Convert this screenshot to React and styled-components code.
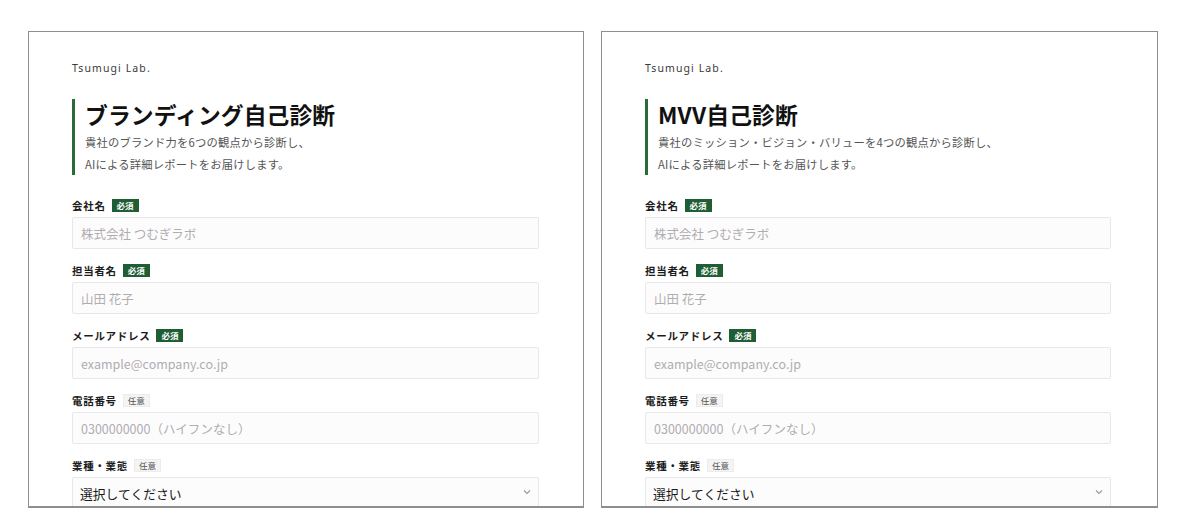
import React from "react";
import styled, { createGlobalStyle } from "styled-components";

const Global = createGlobalStyle`
  html, body { margin: 0; padding: 0; background: #ffffff; }
  body { font-family: "Noto Sans CJK JP", "Noto Sans", sans-serif; color: #1a1a1a; }
  * { box-sizing: border-box; }
`;

const Stage = styled.div`
  display: flex;
  gap: 17px;
  padding: 31px 0 0 28px;
  height: 530px;
`;

const Panel = styled.section`
  width: ${(p) => p.$w}px;
  height: 477px;
  border: 1px solid #8e8e8e;
  border-bottom-width: 2px;
  background: #fff;
  overflow: hidden;
  padding: 27px 44px 0 43px;
  display: flex;
  flex-direction: column;
`;

const Brand = styled.div`
  font-family: "Noto Sans", sans-serif;
  font-size: 10.5px;
  letter-spacing: 1.1px;
  color: #3a3a3a;
  line-height: 18px;
  margin-bottom: 22px;
`;

const Hero = styled.header`
  border-left: 3px solid #2c6a3c;
  padding-left: 10px;
  margin-bottom: 22px;
`;

const Title = styled.h1`
  margin: 0;
  font-size: 22.8px;
  font-weight: 700;
  line-height: 32px;
  color: #111;
  letter-spacing: 0.1px;
`;

const Lead = styled.p`
  margin: 0;
  font-size: 11.3px;
  line-height: 22px;
  color: #555;
  letter-spacing: 0.2px;
`;

const Field = styled.div`
  display: flex;
  flex-direction: column;
  gap: 4px;
  margin-bottom: 13px;
`;

const LabelRow = styled.label`
  display: flex;
  align-items: center;
  gap: 6px;
  height: 16px;
  font-size: 10.5px;
  font-weight: 700;
  letter-spacing: 0.7px;
  color: #1c1c1c;
`;

const Badge = styled.span`
  display: inline-flex;
  align-items: center;
  height: 13px;
  padding: 0 4px;
  font-size: 8.5px;
  letter-spacing: 0;
  line-height: 1;
  color: ${(p) => (p.$req ? "#ffffff" : "#555")};
  background: ${(p) => (p.$req ? "#1f5d34" : "#f4f4f4")};
  border: 1px solid ${(p) => (p.$req ? "#1f5d34" : "#ececec")};
  font-weight: ${(p) => (p.$req ? 700 : 400)};
`;

const Input = styled.input`
  width: ${(p) => p.$w || 467}px;
  height: 32px;
  border: 1px solid #e9e7ea;
  border-radius: 2px;
  background: #fdfcfd;
  padding: 0 8px;
  font-family: "Noto Sans CJK JP", "Noto Sans", sans-serif;
  font-size: 12.5px;
  color: #222;
  outline: none;
  &::placeholder { color: #b0adb0; }
`;

const SelectWrap = styled.div`
  position: relative;
  width: ${(p) => p.$w || 467}px;
`;

const Select = styled.select`
  appearance: none;
  width: 100%;
  height: 32px;
  border: 1px solid #e9e7ea;
  border-radius: 2px;
  background: #fdfcfd;
  padding: 0 7px;
  font-family: "Noto Sans CJK JP", "Noto Sans", sans-serif;
  font-size: 12.8px;
  color: #1a1a1a;
  outline: none;
`;

const Chevron = styled.svg`
  position: absolute;
  right: 8px;
  top: 12px;
  width: 8px;
  height: 6px;
`;

const fields = [
  { label: "会社名", req: true, ph: "株式会社 つむぎラボ" },
  { label: "担当者名", req: true, ph: "山田 花子" },
  { label: "メールアドレス", req: true, ph: "example@company.co.jp" },
  { label: "電話番号", req: false, ph: "0300000000（ハイフンなし）" },
];

function Form({ title, lead, w, inputW }) {
  return (
    <Panel $w={w}>
      <Brand>Tsumugi Lab.</Brand>
      <Hero>
        <Title>{title}</Title>
        <Lead>{lead}</Lead>
        <Lead>AIによる詳細レポートをお届けします。</Lead>
      </Hero>
      {fields.map((f) => (
        <Field key={f.label}>
          <LabelRow>
            {f.label}
            <Badge $req={f.req}>{f.req ? "必須" : "任意"}</Badge>
          </LabelRow>
          <Input $w={inputW} placeholder={f.ph} />
        </Field>
      ))}
      <Field>
        <LabelRow>
          業種・業態
          <Badge>任意</Badge>
        </LabelRow>
        <SelectWrap $w={inputW}>
          <Select defaultValue="">
            <option value="">選択してください</option>
          </Select>
          <Chevron viewBox="0 0 8 6">
            <path d="M1 1.5 L4 4.5 L7 1.5" fill="none" stroke="#9a979c" strokeWidth="1.1" />
          </Chevron>
        </SelectWrap>
      </Field>
    </Panel>
  );
}

export default function App() {
  return (
    <>
      <Global />
      <Stage>
        <Form
          w={556}
          inputW={467}
          title="ブランディング自己診断"
          lead="貴社のブランド力を6つの観点から診断し、"
        />
        <Form
          w={557}
          inputW={466}
          title="MVV自己診断"
          lead="貴社のミッション・ビジョン・バリューを4つの観点から診断し、"
        />
      </Stage>
    </>
  );
}
